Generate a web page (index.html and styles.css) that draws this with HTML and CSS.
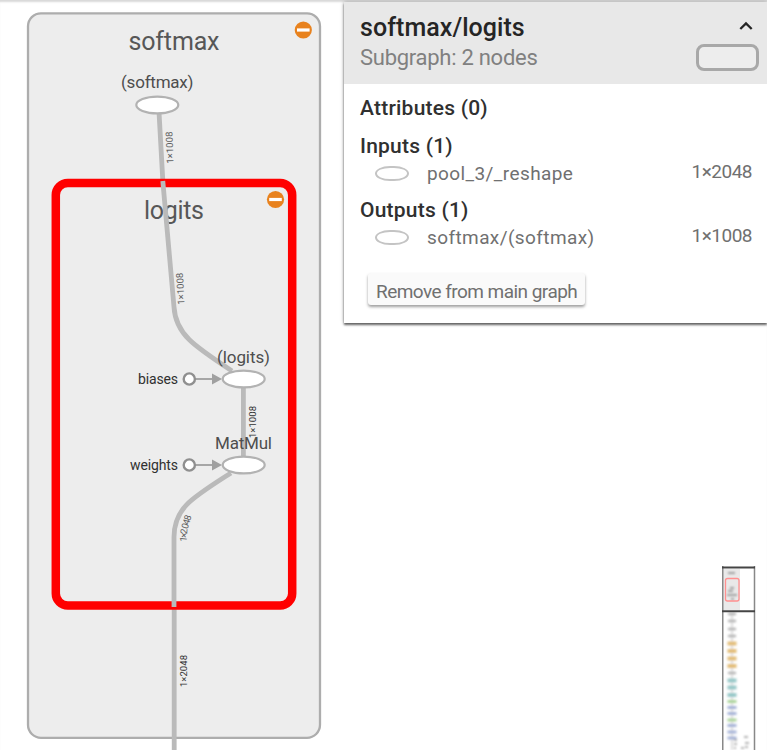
FILE: index.html
```html
<!DOCTYPE html>
<html lang="en">
<head>
<meta charset="utf-8">
<title>Graph</title>
<link rel="stylesheet" href="styles.css">
</head>
<body>
<main class="workspace">
  <svg class="graph" width="340" height="750" viewBox="0 0 340 750">
    <defs>
      <g id="collapse"><circle r="8.6" fill="#e8821e"/><rect x="-6.3" y="-1.6" width="12.6" height="3.2" fill="#fff"/></g>
      <ellipse id="op" rx="21" ry="8.4" fill="#fff" stroke="#b2b2b2" stroke-width="2.2"/>
      <circle id="const" r="5.6" fill="#fff" stroke="#8f8f8f" stroke-width="2.4"/>
    </defs>
    <rect x="28" y="13.3" width="292" height="724.5" rx="13" fill="#ededed" stroke="#adadad" stroke-width="2.3"/>
    <use href="#collapse" x="303.3" y="30"/>
    <text class="scope" x="128.5" y="50" textLength="91">softmax</text>
    <path class="edge" d="M159 112L163 184M174.2 605V750"/>
    <rect x="55.8" y="182.9" width="236.4" height="422.6" rx="12" fill="#ededed" stroke="#f00" stroke-width="8.5"/>
    <use href="#collapse" x="275.5" y="199.5"/>
    <text class="scope" x="144" y="219" textLength="60">logits</text>
    <path class="edge" d="M162.8 181L174 307C175.5 334 194 346 232 371M243.4 387V456M231 473C192 498 174 508 174 537V607"/>
    <use href="#op" x="157.3" y="105"/>
    <use href="#op" x="243.7" y="379"/>
    <use href="#op" x="243.7" y="465"/>
    <text class="op-name" x="121" y="88" textLength="72.5">(softmax)</text>
    <text class="op-name" x="217" y="363" textLength="53">(logits)</text>
    <text class="op-name" x="215" y="449" textLength="57">MatMul</text>
    <g stroke="#a6a6a6" stroke-width="1.8"><path d="M195 379H213M195 465H213"/></g>
    <path d="M212 373.6L222 379L212 384.4ZM212 459.6L222 465L212 470.4Z" fill="#a0a0a0"/>
    <use href="#const" x="189.3" y="379"/>
    <use href="#const" x="189.3" y="465"/>
    <text class="const-name" x="138" y="384" textLength="40">biases</text>
    <text class="const-name" x="130" y="469.5" textLength="48">weights</text>
    <g class="shape">
      <text transform="translate(173.500 163.5) rotate(-92)" textLength="32">1×1008</text>
      <text transform="translate(184.500 304.5) rotate(-93)" textLength="32">1×1008</text>
      <text class="strong" transform="translate(255.500 438) rotate(-90)" textLength="32">1×1008</text>
      <text transform="translate(186.4 542) rotate(-85)" textLength="13">1×2</text>
      <text transform="translate(187.4 529.500) rotate(-72)" textLength="14">048</text>
      <text class="strong" transform="translate(186.5 687) rotate(-90)" textLength="32">1×2048</text>
    </g>
  </svg>
  <aside class="side">
    <section class="info">
      <header class="info-head">
        <div>
          <h1>softmax/logits</h1>
          <p class="sub">Subgraph: 2 nodes</p>
        </div>
        <div class="head-tools">
          <svg width="14" height="10" viewBox="0 0 14 10"><path d="M1.3 8L7 2.4L12.7 8" fill="none" stroke="#252525" stroke-width="2.3"/></svg>
          <span class="swatch"></span>
        </div>
      </header>
      <div class="info-body">
        <h2 class="attributes">Attributes (0)</h2>
        <h2 class="inputs">Inputs (1)</h2>
        <div class="row"><span class="pill"></span><span class="name">pool_3/_reshape</span><span class="dims">1×2048</span></div>
        <h2 class="outputs">Outputs (1)</h2>
        <div class="row"><span class="pill"></span><span class="name">softmax/(softmax)</span><span class="dims">1×1008</span></div>
        <button class="remove">Remove from main graph</button>
      </div>
    </section>
    <svg class="minimap" width="34" height="184" viewBox="0 0 34 184">
      <defs>
        <filter id="soft" x="-30%" y="-30%" width="160%" height="160%"><feGaussianBlur stdDeviation=".9"/></filter>
      </defs>
      <rect width="34" height="184" fill="#fff"/>
      <rect x="1" y="3" width="17" height="41" fill="#e9e9e9"/>
      <g filter="url(#soft)">
        <path d="M10 46V184" stroke="#dedede" stroke-width="2"/>
        <path d="M6 7H13M8 22H12M6 25H11M5 29H15M9 33H12" stroke="#888" stroke-width="1.4"/>
        <path d="M6 48H14M6 55H14M6 63H14M6 70H14M6 107H14" stroke="#b5b5b5" stroke-width="2.5"/>
        <path d="M5.500 77.500H14.500M5.500 85H14.500M5.500 92.500H14.500M5.500 100H14.500" stroke="#e3bd78" stroke-width="4"/>
        <path d="M5.500 114.500H14.500M5.500 121.500H14.500M5.500 129H14.500" stroke="#96c8c8" stroke-width="4"/>
        <path d="M5.500 135.500H14.500M5.500 154H14.500" stroke="#abd49b" stroke-width="3"/>
        <path d="M5.500 141.500H14.500M5.500 147.500H14.500M5.500 159.500H14.500M5.500 166H14.500M5.500 172H14.500" stroke="#a5b3d8" stroke-width="3"/>
        <path d="M12 174H15M12 178H15M12 182H14M22 171H26M23 177H27M19 182H22M23 181H26" stroke="#999" stroke-width="1.7"/>
      </g>
      <rect x="3.500" y="12.500" width="13.500" height="22.500" rx="2" fill="none" stroke="#ff9090" stroke-width="1.3"/>
      <path d="M.75 0V184M32.500 0V184" stroke="#888" stroke-width="1.500"/>
      <path d="M0 1.500H33M0 45.300H33" stroke="#454545" stroke-width="2"/>
    </svg>
  </aside>
</main>
</body>
</html>
```
FILE: styles.css
```css
* { box-sizing: border-box; }
body { margin: 0; font-family: Roboto, sans-serif; background: #fff; overflow: hidden; }
h1, h2, p { margin: 0; white-space: nowrap; }
svg { display: block; }

.workspace {
  display: flex;
  height: 750px;
  gap: 4px;
  box-shadow: inset 0 3px 2px -1px #d9d9d9;
}
.graph { flex: none; }
.scope { font-size: 25px; fill: #575757; }
.op-name { font-size: 17px; fill: #4e4e4e; }
.const-name { font-size: 14px; fill: #303030; }
.shape { font-size: 9.5px; fill: #606060; }
.shape .strong { fill: #333; }
.edge { fill: none; stroke: #bababa; stroke-width: 4.8; }

.side { flex: 1; display: flex; flex-direction: column; justify-content: space-between; }
.info {
  height: 321px;
  margin-top: 2px;
  background: #fff;
  box-shadow: 0 2px 2px rgba(0, 0, 0, .55), 0 0 4px rgba(0, 0, 0, .3);
}
.info-head {
  display: flex;
  justify-content: space-between;
  height: 82px;
  padding: 11px 8px 0 16px;
  background: #e8e8e8;
}
h1 { font-size: 25px; line-height: 30px; font-weight: 500; color: #252525; letter-spacing: .05px; }
.sub { font-size: 22px; line-height: 29px; color: #808080; letter-spacing: -.27px; }
.head-tools { display: flex; flex-direction: column; align-items: flex-end; gap: 13px; padding-top: 8px; }
.head-tools svg { margin-right: 6px; }
.swatch { width: 63px; height: 27px; border: 3px solid #a8a8a8; border-radius: 8px; background: #ededed; }

.info-body { padding: 11px 15px 0 16px; }
h2 { font-size: 21px; line-height: 26px; font-weight: 500; color: #303030; letter-spacing: .22px; }
.inputs { margin-top: 12px; }
.outputs { margin-top: 10px; }
.row { display: flex; height: 28px; padding-left: 15px; }
.pill { width: 34px; height: 15px; margin-top: 7px; border: 2px solid #c4c4c4; border-radius: 15px / 7.5px; }
.name { margin-left: 18px; font-size: 19px; line-height: 30px; color: #707070; letter-spacing: .4px; }
.dims { margin-left: auto; font-size: 19px; line-height: 25px; color: #707070; letter-spacing: -.5px; }
.remove {
  display: block;
  width: 217px;
  height: 32px;
  margin: 22px 0 0 8px;
  padding: 5px 0 0 8px;
  border: 0;
  border-radius: 3px;
  background: #fafafa;
  box-shadow: 0 2px 3px rgba(0, 0, 0, .38);
  font: 19px/22px Roboto, sans-serif;
  letter-spacing: -.54px;
  text-align: left;
  color: #707070;
  white-space: nowrap;
}
.minimap { align-self: flex-start; margin-left: 378px; }
```
